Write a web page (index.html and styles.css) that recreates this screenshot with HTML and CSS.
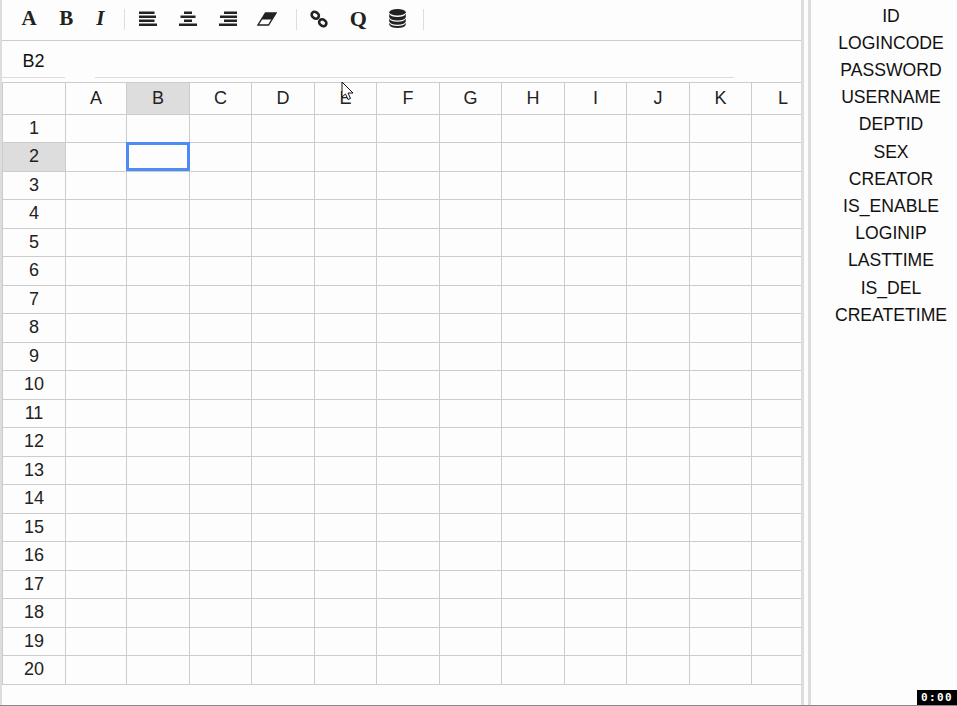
FILE: index.html
```html
<!DOCTYPE html>
<html lang="en">
<head>
  <meta charset="UTF-8" />
  <title>Sheet</title>
  <link rel="stylesheet" href="styles.css">
</head>
<body>
  <div class="page">
    <div class="sheet">
      <div class="toolbar">
        <span class="tool glyph">A</span>
        <span class="tool glyph">B</span>
        <span class="tool glyph italic">I</span>
        <span class="sep sep-first"></span>
        <span class="tool-box wide">
          <svg width="18" height="15" viewBox="0 0 18 15"><path d="M0 .5h15.500V3H0zM0 4.500h17v2.500H0zM0 8.500h15.500V11H0zM0 12.500h18V15H0z"/></svg>
        </span>
        <span class="tool-box wide">
          <svg width="18" height="15" viewBox="0 0 18 15"><path d="M5 .5h8V3H5zM1.500 4.500h15V7h-15zM5 8.500h8V11H5zM0 12.500h18V15H0z"/></svg>
        </span>
        <span class="tool-box wide">
          <svg width="18" height="15" viewBox="0 0 18 15"><path d="M5 .5h13V3H5zM1 4.500h17V7H1zM5 8.500h13V11H5zM0 12.500h18V15H0z"/></svg>
        </span>
        <span class="tool-box eraser">
          <svg width="20" height="14" viewBox="0 0 20 14"><path d="M8.500 1h10.500L11.500 13H1z" fill="#fff" stroke="#222" stroke-width="1.400"/><path d="M8.500 1h10.500L15 7.500H4.500z"/></svg>
        </span>
        <span class="sep sep-second"></span>
        <span class="tool-box narrow">
          <svg width="18" height="18" viewBox="0 0 18 18"><g fill="none" stroke="#222" stroke-width="2.600"><rect x="1.500" y="2.200" width="7.500" height="6" rx="3" transform="rotate(35 5.200 5.200)"/><rect x="9" y="9.800" width="7.500" height="6" rx="3" transform="rotate(35 12.800 12.800)"/></g></svg>
        </span>
        <span class="tool-box narrow glyph-q">Q</span>
        <span class="tool-box narrow">
          <svg width="17" height="19" viewBox="0 0 17 19"><ellipse cx="8.500" cy="3.200" rx="8.300" ry="3.200"/><path d="M.2 4.800c1 2.200 3.800 3.200 8.300 3.200s7.300-1 8.300-3.200v3.400c-1 2.200-3.800 3.300-8.300 3.300s-7.300-1.100-8.300-3.300zM.2 9.400c1 2.200 3.800 3.300 8.300 3.300s7.300-1.100 8.300-3.300v3.200c-1 2.200-3.800 3.200-8.300 3.200s-7.300-1-8.300-3.200zM.2 13.800c1 2.200 3.800 3.200 8.300 3.200s7.300-1 8.300-3.200v2c-1 2.200-3.800 3.200-8.300 3.200s-7.300-1-8.300-3.200z"/></svg>
        </span>
        <span class="sep sep-last"></span>
      </div>

      <div class="formula-bar">
        <div class="cell-name">B2</div>
        <div class="formula-input"></div>
      </div>

      <div class="grid-wrap">
        <table class="grid">
          <colgroup>
            <col class="w63"><col class="w61"><col class="w63"><col class="w62"><col class="w63"><col class="w62"><col class="w63"><col class="w62"><col class="w63"><col class="w62"><col class="w63"><col class="w62"><col class="w63">
          </colgroup>
          <thead>
            <tr><th></th><th>A</th><th class="active">B</th><th>C</th><th>D</th><th>E</th><th>F</th><th>G</th><th>H</th><th>I</th><th>J</th><th>K</th><th>L</th></tr>
          </thead>
          <tbody id="rows"></tbody>
        </table>
      </div>
    </div>

    <ul class="fields">
      <li>ID</li>
      <li>LOGINCODE</li>
      <li>PASSWORD</li>
      <li>USERNAME</li>
      <li>DEPTID</li>
      <li>SEX</li>
      <li>CREATOR</li>
      <li>IS_ENABLE</li>
      <li>LOGINIP</li>
      <li>LASTTIME</li>
      <li>IS_DEL</li>
      <li>CREATETIME</li>
    </ul>
  </div>
  <div class="bottom-line"></div>

  <svg class="cursor" width="14" height="20" viewBox="0 0 14 20"><path d="M1 1v15l3.500-3 2.500 5.500 2.500-1L7 12h5z" fill="#fff" stroke="#111" stroke-width="1"/></svg>
  <div class="rec-timer">0:00</div>

  <script>
    // Build the 20 empty rows
    const rows = document.getElementById("rows");
    for (let r = 1; r <= 20; r++) {
      const tr = document.createElement("tr");
      const head = document.createElement("td");
      head.textContent = r;
      head.className = r === 2 ? "row-head active" : "row-head";
      tr.appendChild(head);
      for (let c = 0; c < 12; c++) {
        const td = document.createElement("td");
        if (r === 2 && c === 1) td.className = "selected";
        tr.appendChild(td);
      }
      rows.appendChild(tr);
    }
  </script>
</body>
</html>
```

FILE: styles.css
```css
html, body {
  margin: 0;
  height: 100%;
  overflow: hidden;
}

body {
  font-family: "Liberation Sans", Arial, sans-serif;
  background-color: #fdfdfd;
  color: #222;
  display: flex;
  flex-direction: column;
  height: 706px;
}

.page {
  flex: 1;
  display: flex;
  min-height: 0;
}

.sheet {
  width: 804px;
  box-sizing: border-box;
  border-left: 2px solid #ddd;
  border-right: 3px solid #ddd;
  overflow: hidden;
}

.toolbar {
  height: 37px;
  padding: 0 0 3px 8px;
  border-bottom: 1px solid #ccc;
  display: flex;
  align-items: center;
}

.tool {
  padding: 0 11.4px;
}

.glyph {
  font-family: "Liberation Serif", serif;
  font-weight: bold;
  font-size: 21px;
  line-height: 1;
  color: #222;
}

.italic {
  font-style: italic;
}

.tool-box {
  display: flex;
  justify-content: center;
  align-items: center;
}

.tool-box svg {
  fill: #222;
}

.wide {
  width: 40px;
}

.eraser {
  width: 38px;
}

.narrow {
  width: 39px;
}

.glyph-q {
  font-family: "Liberation Serif", serif;
  font-weight: bold;
  font-size: 22px;
  line-height: 1;
  color: #222;
}

.sep {
  width: 1px;
  height: 21px;
  margin-top: 2px;
  background-color: #ddd;
}

.sep-first {
  margin-left: 8.700px;
  margin-right: 3px;
}

.sep-second {
  margin-left: 10px;
  margin-right: 2.500px;
}

.sep-last {
  margin-left: 6.500px;
}

.formula-bar {
  height: 41px;
  display: flex;
  align-items: flex-start;
}

.cell-name {
  width: 63px;
  height: 37px;
  box-sizing: border-box;
  border-bottom: 1px solid #ddd;
  font-size: 18px;
  line-height: 41px;
  text-align: center;
  color: #111;
}

.formula-input {
  width: 639px;
  height: 37px;
  box-sizing: border-box;
  margin-left: 30px;
  border-bottom: 1px solid #ddd;
}

.grid-wrap {
  overflow: hidden;
}

.grid {
  table-layout: fixed;
  width: 813px;
  border-collapse: separate;
  border-spacing: 0;
  border-top: 1px solid #ccc;
  border-left: 1px solid #ccc;
  font-size: 18px;
}

.w61 { width: 61px; }
.w62 { width: 62px; }
.w63 { width: 63px; }

.grid th,
.grid td {
  box-sizing: border-box;
  padding: 0;
  border-right: 1px solid #ccc;
  border-bottom: 1px solid #ccc;
  text-align: center;
  font-weight: normal;
}

.grid th {
  height: 32px;
}

.grid tbody tr:nth-child(odd) td {
  height: 28px;
}

.grid tbody tr:nth-child(even) td {
  height: 29px;
  padding-bottom: 2px;
}

.grid .active {
  background-color: #ddd;
}

.grid .selected {
  position: relative;
}

.selected::after {
  content: "";
  position: absolute;
  top: -1px;
  left: -1px;
  right: -1px;
  bottom: 0;
  border: 3px solid #4d8bf5;
}

.fields {
  list-style: none;
  margin: 0 0 0 4px;
  padding: 2.500px 0 0 14px;
  flex: 1;
  border-left: 3px solid #ddd;
  font-size: 17.6px;
  line-height: 27.2px;
  text-align: center;
  color: #111;
}

.bottom-line {
  height: 1px;
  background-color: #888;
}

.cursor {
  position: absolute;
  left: 341px;
  top: 81px;
}

.rec-timer {
  position: absolute;
  right: 0;
  bottom: 1px;
  width: 40px;
  height: 15px;
  background-color: #000;
  color: #fff;
  font-family: "DejaVu Sans Mono", monospace;
  font-weight: bold;
  font-size: 11px;
  line-height: 15px;
  letter-spacing: 1.400px;
  text-align: center;
}
```
